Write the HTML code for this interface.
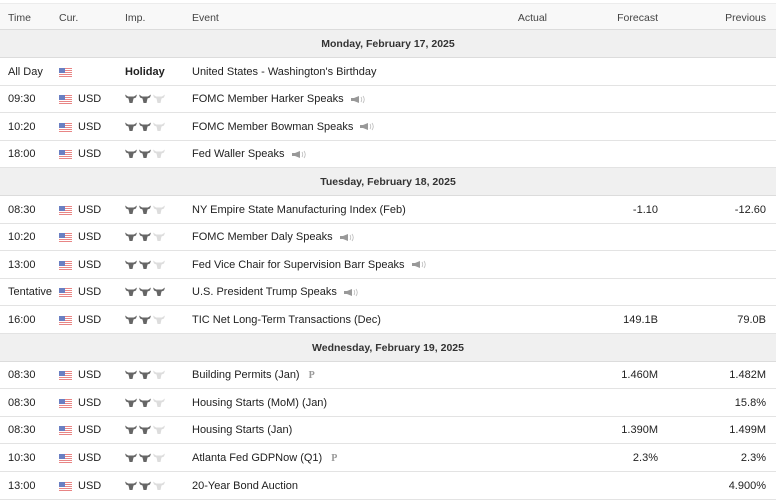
<!DOCTYPE html>
<html><head><meta charset="utf-8"><style>
*{margin:0;padding:0;box-sizing:border-box}
body{width:776px;height:493px;overflow:hidden;background:#fff;font-family:"Liberation Sans",Arial,sans-serif;font-size:11px;color:#222;position:relative}
.r{position:absolute;left:0;width:776px;height:28px;border-bottom:1px solid #e3e3e3}
.r>span{position:absolute;top:8px;white-space:nowrap}
.h{top:3px;height:27px;background:#f8f8f8;border-top:1px solid #ececec;border-bottom:1px solid #dcdcdc}
.h>span{color:#444;font-size:10.5px}
.d{background:#f0f0f0;border-bottom:1px solid #dcdcdc}
.d>span{left:0;width:776px;text-align:center;font-weight:bold;color:#333;font-size:10.5px}
.t{left:8px}.c{left:78px}.e{left:192px}
.a{right:229px}.f{right:118px}.p{right:10px}
.fl{position:absolute;left:59px;top:10px;width:13px;height:9px;background:repeating-linear-gradient(#e88585 0 1px,#fff 1px 2px)}
.fl:before{content:"";position:absolute;left:0;top:0;width:6px;height:5px;background:#6a7fc2}
.imp{position:absolute;left:125px;top:9px;}
.sp{display:inline-block;vertical-align:middle;margin-left:6px}
.P{color:#999;font-family:"Liberation Serif",serif;font-weight:bold;margin-left:9px;font-size:10px}
</style></head><body>
<svg width="0" height="0" style="position:absolute"><defs>
<g id="b"><path d="M0 0.5 L3 2.5 L9 2.5 L12 0.5 L11 3.5 L8.5 4.5 L7.5 9 L4.5 9 L3.5 4.5 L1 3.5Z"/></g>
<g id="s"><path d="M1 3h3l5-2v7l-5-2H1z" fill="#999"/><path d="M11 2q1.5 2.5 0 5M13 1q2.5 3.5 0 7" stroke="#bbb" fill="none" stroke-width=".8"/></g>
</defs></svg>

<div class="r h"><span class="t">Time</span><span class="c" style="left:59px">Cur.</span><span style="left:125px">Imp.</span><span class="e">Event</span><span class="a">Actual</span><span class="f">Forecast</span><span class="p">Previous</span></div>

<div class="r d" style="top:30px"><span>Monday, February 17, 2025</span></div>
<div class="r" style="top:57.6px"><span class="t">All Day</span><i class="fl"></i><span style="left:125px;font-weight:bold">Holiday</span><span class="e">United States - Washington's Birthday</span></div>
<div class="r" style="top:85.2px"><span class="t">09:30</span><i class="fl"></i><span class="c">USD</span><svg class="imp" width="40" height="10"><use href="#b" fill="#666"/><use href="#b" x="14" fill="#666"/><use href="#b" x="28" fill="#ddd"/></svg><span class="e">FOMC Member Harker Speaks<svg class="sp" width="15" height="9"><use href="#s"/></svg></span></div>
<div class="r" style="top:112.8px"><span class="t">10:20</span><i class="fl"></i><span class="c">USD</span><svg class="imp" width="40" height="10"><use href="#b" fill="#666"/><use href="#b" x="14" fill="#666"/><use href="#b" x="28" fill="#ddd"/></svg><span class="e">FOMC Member Bowman Speaks<svg class="sp" width="15" height="9"><use href="#s"/></svg></span></div>
<div class="r" style="top:140.4px"><span class="t">18:00</span><i class="fl"></i><span class="c">USD</span><svg class="imp" width="40" height="10"><use href="#b" fill="#666"/><use href="#b" x="14" fill="#666"/><use href="#b" x="28" fill="#ddd"/></svg><span class="e">Fed Waller Speaks<svg class="sp" width="15" height="9"><use href="#s"/></svg></span></div>

<div class="r d" style="top:168px"><span>Tuesday, February 18, 2025</span></div>
<div class="r" style="top:195.6px"><span class="t">08:30</span><i class="fl"></i><span class="c">USD</span><svg class="imp" width="40" height="10"><use href="#b" fill="#666"/><use href="#b" x="14" fill="#666"/><use href="#b" x="28" fill="#ddd"/></svg><span class="e">NY Empire State Manufacturing Index (Feb)</span><span class="f">-1.10</span><span class="p">-12.60</span></div>
<div class="r" style="top:223.2px"><span class="t">10:20</span><i class="fl"></i><span class="c">USD</span><svg class="imp" width="40" height="10"><use href="#b" fill="#666"/><use href="#b" x="14" fill="#666"/><use href="#b" x="28" fill="#ddd"/></svg><span class="e">FOMC Member Daly Speaks<svg class="sp" width="15" height="9"><use href="#s"/></svg></span></div>
<div class="r" style="top:250.8px"><span class="t">13:00</span><i class="fl"></i><span class="c">USD</span><svg class="imp" width="40" height="10"><use href="#b" fill="#666"/><use href="#b" x="14" fill="#666"/><use href="#b" x="28" fill="#ddd"/></svg><span class="e">Fed Vice Chair for Supervision Barr Speaks<svg class="sp" width="15" height="9"><use href="#s"/></svg></span></div>
<div class="r" style="top:278.4px"><span class="t">Tentative</span><i class="fl"></i><span class="c">USD</span><svg class="imp" width="40" height="10"><use href="#b" fill="#666"/><use href="#b" x="14" fill="#666"/><use href="#b" x="28" fill="#666"/></svg><span class="e">U.S. President Trump Speaks<svg class="sp" width="15" height="9"><use href="#s"/></svg></span></div>
<div class="r" style="top:306px"><span class="t">16:00</span><i class="fl"></i><span class="c">USD</span><svg class="imp" width="40" height="10"><use href="#b" fill="#666"/><use href="#b" x="14" fill="#666"/><use href="#b" x="28" fill="#ddd"/></svg><span class="e">TIC Net Long-Term Transactions (Dec)</span><span class="f">149.1B</span><span class="p">79.0B</span></div>

<div class="r d" style="top:333.6px"><span>Wednesday, February 19, 2025</span></div>
<div class="r" style="top:361.2px"><span class="t">08:30</span><i class="fl"></i><span class="c">USD</span><svg class="imp" width="40" height="10"><use href="#b" fill="#666"/><use href="#b" x="14" fill="#666"/><use href="#b" x="28" fill="#ddd"/></svg><span class="e">Building Permits (Jan)<b class="P">P</b></span><span class="f">1.460M</span><span class="p">1.482M</span></div>
<div class="r" style="top:388.8px"><span class="t">08:30</span><i class="fl"></i><span class="c">USD</span><svg class="imp" width="40" height="10"><use href="#b" fill="#666"/><use href="#b" x="14" fill="#666"/><use href="#b" x="28" fill="#ddd"/></svg><span class="e">Housing Starts (MoM) (Jan)</span><span class="p">15.8%</span></div>
<div class="r" style="top:416.4px"><span class="t">08:30</span><i class="fl"></i><span class="c">USD</span><svg class="imp" width="40" height="10"><use href="#b" fill="#666"/><use href="#b" x="14" fill="#666"/><use href="#b" x="28" fill="#ddd"/></svg><span class="e">Housing Starts (Jan)</span><span class="f">1.390M</span><span class="p">1.499M</span></div>
<div class="r" style="top:444px"><span class="t">10:30</span><i class="fl"></i><span class="c">USD</span><svg class="imp" width="40" height="10"><use href="#b" fill="#666"/><use href="#b" x="14" fill="#666"/><use href="#b" x="28" fill="#ddd"/></svg><span class="e">Atlanta Fed GDPNow (Q1)<b class="P">P</b></span><span class="f">2.3%</span><span class="p">2.3%</span></div>
<div class="r" style="top:471.6px"><span class="t">13:00</span><i class="fl"></i><span class="c">USD</span><svg class="imp" width="40" height="10"><use href="#b" fill="#666"/><use href="#b" x="14" fill="#666"/><use href="#b" x="28" fill="#ddd"/></svg><span class="e">20-Year Bond Auction</span><span class="p">4.900%</span></div>
</body></html>
